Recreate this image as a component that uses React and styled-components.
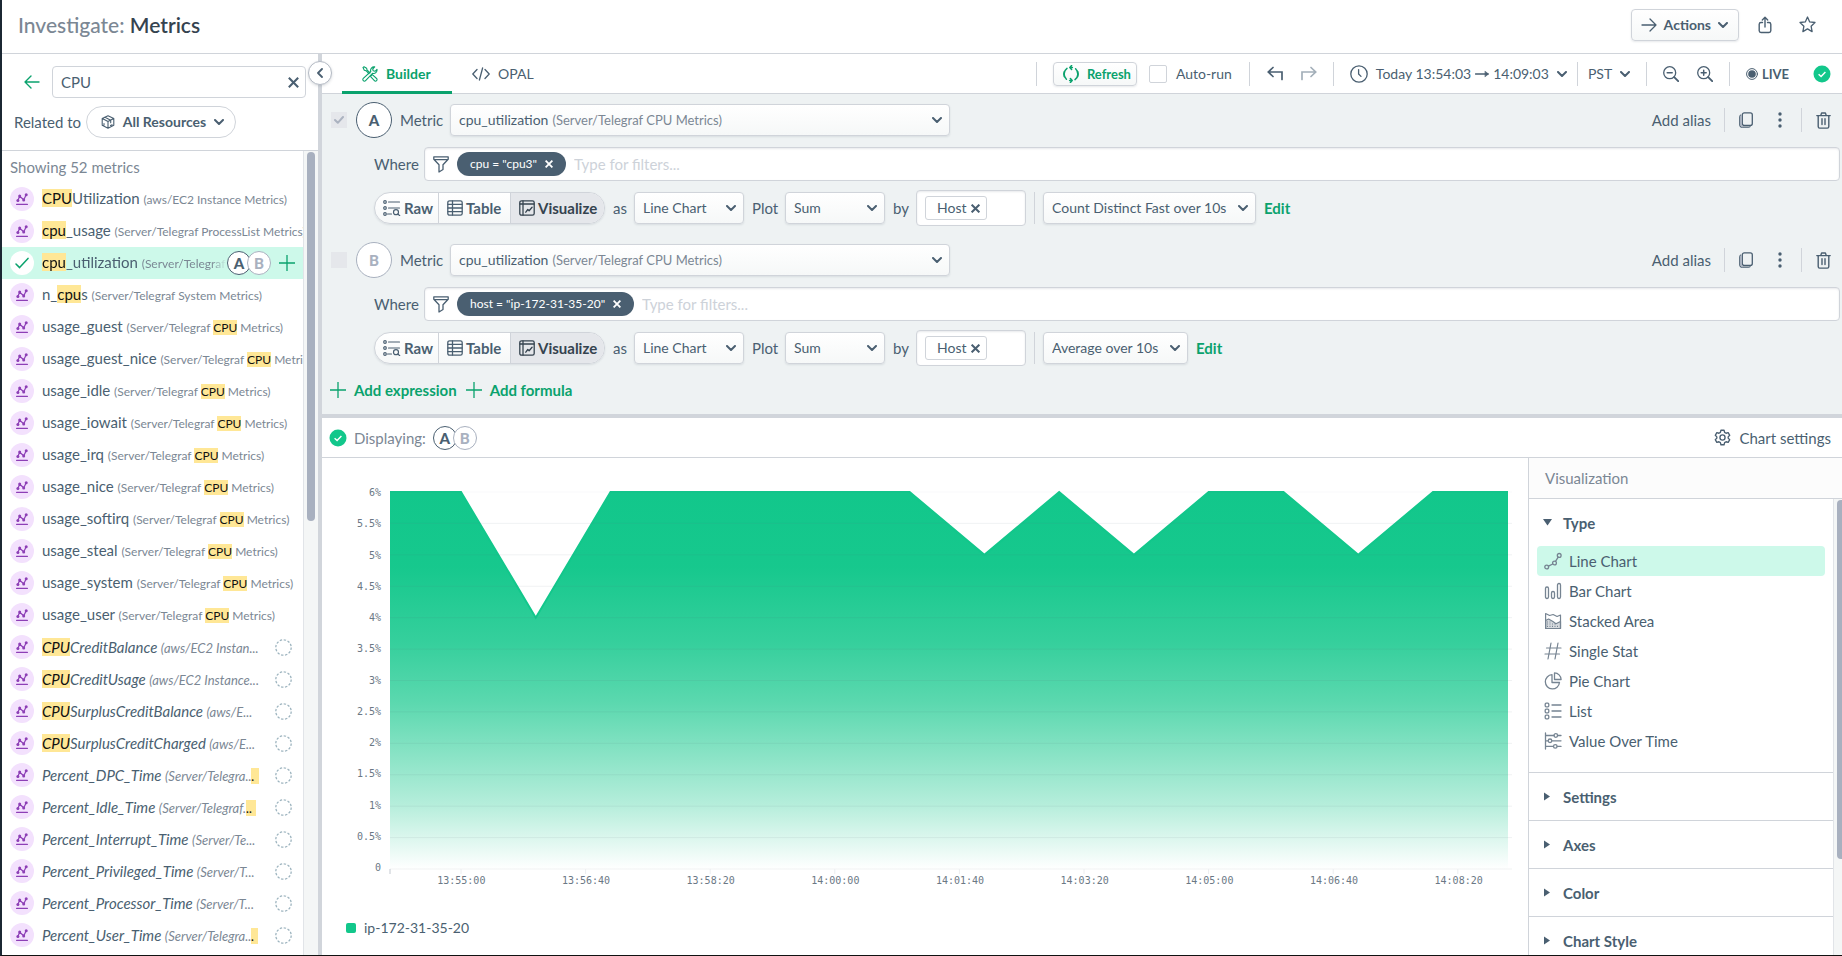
import React from "react";
import styled, { createGlobalStyle, css } from "styled-components";

const c = {
  text: "#4a5f71",
  dark: "#35434f",
  muted: "#7b8794",
  faint: "#a9b1bf",
  line: "#d0d4da",
  green: "#0aa26d",
  bright: "#12c78b",
  mint: "#cdf9ea",
  panel: "#eef2f3",
};

const GlobalStyle = createGlobalStyle`
  *, *::before, *::after { box-sizing: border-box; }
  body { margin: 0; background: #fff; }
  body, button, input, select {
    font-family: Lato, "Open Sans", sans-serif;
    font-size: 15px;
    line-height: 20px;
    color: ${c.text};
  }
  button { border: 0; background: none; padding: 0; cursor: pointer; }
  svg { display: block; flex: none; }
  ul { list-style: none; margin: 0; padding: 0; }
  h1, h2 { margin: 0; font-weight: 400; }
`;

/* ---------- icons ---------- */

const Svg = ({ w = 16, h, vb, sw = 1.3, children, ...rest }) => (
  <svg
    width={w}
    height={h || w}
    viewBox={vb || `0 0 ${w} ${h || w}`}
    fill="none"
    stroke="currentColor"
    strokeWidth={sw}
    strokeLinecap="round"
    strokeLinejoin="round"
    aria-hidden="true"
    {...rest}
  >
    {children}
  </svg>
);

const Chevron = () => (
  <Svg w={10} h={6} sw={2}>
    <path d="M1 1l4 4 4-4" />
  </Svg>
);
const Cross = ({ size = 8, sw = 1.8 }) => (
  <Svg w={size} vb="0 0 8 8" sw={sw} strokeLinecap="butt">
    <path d="M.6.6l6.8 6.8M7.4.6L.6 7.4" />
  </Svg>
);
const Plus = () => (
  <Svg strokeLinecap="butt">
    <path d="M8 0v16M0 8h16" />
  </Svg>
);
const MetricGlyph = () => (
  <Svg w={12} sw={1.2}>
    <path d="M.6 11.4h10.8M1.8 7.8l1.8-4.6 4.2 3.6 2.4-5" />
    <g fill="currentColor" stroke="none">
      <circle cx="1.9" cy="7.6" r="1.5" />
      <circle cx="3.7" cy="3" r="1.5" />
      <circle cx="7.7" cy="6.9" r="1.5" />
      <circle cx="10.2" cy="1.8" r="1.5" />
    </g>
  </Svg>
);
const CheckThin = () => (
  <Svg w={14} h={12} sw={1.5}>
    <path d="M1 7l3.6 3.6L13 1.4" />
  </Svg>
);
const BackArrow = () => (
  <Svg w={16} h={14} sw={1.4}>
    <path d="M15 7H1M7 1L1 7l6 6" />
  </Svg>
);
const Cube = () => (
  <Svg w={14} sw={1.1}>
    <path d="M7 .7l5.8 2.8v6.8L7 13.3l-5.8-3V3.500zM1.400 3.600L7 6.600l5.600-3M7 6.600v6.500M4 2.200l5.700 3v2.600M9.500 10.500l1.600-.8M3 8.500v1.400" />
  </Svg>
);
const Tools = () => (
  <Svg sw={1.1}>
    <path d="M1 1.600L2 .7l2.600 1.500.4 1.600 3 3M1 1.600l1.300 2.600 1.700.5 2.900 3M9.300 9.600l1-1 4.300 3.900a1.500 1.500 0 010 2.200 1.500 1.500 0 01-2.200 0L8.600 10.600z" />
    <path d="M12.700.9a3.500 3.500 0 00-3.900 4.600L1.300 12.400a1.600 1.600 0 000 2.300 1.600 1.600 0 002.300 0l6.900-7.400a3.500 3.500 0 004.500-4l-2 2-1.800-.5-.5-1.800z" />
  </Svg>
);
const Code = () => (
  <Svg w={18} h={14} sw={1.3}>
    <path d="M5 2.500L.8 7 5 11.500M13 2.500L17.200 7 13 11.500M10.600 1L7.400 13" />
  </Svg>
);
const Refresh = () => (
  <Svg w={18} sw={1.5}>
    <path d="M5 3.400a7 7 0 00-.6 10.800M13 14.600a7 7 0 00.6-10.800" />
    <path d="M10.400 2.500H7.900M9.600.6L7.800 2.500l1.800 2M7.600 15.500h2.500M8.400 13.500l1.800 2-1.800 1.900" />
    <path d="M2.300 6.500a7 7 0 000 5M15.700 11.500a7 7 0 000-5" />
  </Svg>
);
const Undo = ({ flip }) => (
  <Svg sw={1.7} strokeLinejoin="miter" transform={flip ? "scale(-1 1)" : undefined}>
    <path d="M15 13.500V6H1.300M6 1.500L1.300 6 6 10.500" />
  </Svg>
);
const Clock = () => (
  <Svg w={18}>
    <circle cx="9" cy="9" r="8.200" />
    <path d="M8.600 4.600V9l2.400 2.400" />
  </Svg>
);
const Arrow = () => (
  <Svg w={14} h={10} sw={1.4}>
    <path d="M.5 5h12.600" />
    <path d="M10.200 2.300L13.500 5l-3.300 2.700z" fill="currentColor" strokeWidth=".5" />
  </Svg>
);
const ActionArrow = () => (
  <Svg w={16} h={14} sw={1.3}>
    <path d="M1 7h14M9 1l6 6-6 6" />
  </Svg>
);
const Zoom = ({ plus }) => (
  <Svg>
    <circle cx="6.700" cy="6.700" r="6" />
    <path d="M11.200 11.200l4 4" strokeWidth="1.900" />
    <path d={plus ? "M4.200 6.700h5M6.700 4.200v5" : "M4.200 6.700h5"} strokeWidth="1.500" />
  </Svg>
);
const Live = () => (
  <Svg w={12} sw={1}>
    <circle cx="6" cy="6" r="5.400" />
    <circle cx="6" cy="6" r="3.800" fill="currentColor" stroke="none" />
  </Svg>
);
const CheckDisc = () => (
  <svg width="18" height="18" viewBox="0 0 18 18" aria-hidden="true">
    <circle cx="9" cy="9" r="8.500" fill={c.bright} />
    <path d="M5.600 9.200l2.500 2.400 4.300-4.600" fill="none" stroke="#fff" strokeWidth="1.400" />
  </svg>
);
const Share = () => (
  <Svg w={14} h={18} sw={1.4}>
    <path d="M4.500 6.500H3A1.800 1.800 0 001.200 8.200v6.600A1.800 1.800 0 003 16.500h8a1.800 1.800 0 001.800-1.700V8.200A1.800 1.800 0 0011 6.500H9.500M7 11V1.500M4.300 4L7 1.300 9.700 4" />
  </Svg>
);
const Star = () => (
  <Svg sw={1.3} w={17}>
    <path d="M8.500 1l2.200 4.900 5.300.6-3.900 3.700 1 5.400-4.600-2.700-4.600 2.700 1-5.400L1 6.500l5.300-.6z" />
  </Svg>
);
const Copy = () => (
  <Svg w={14} h={16} sw={1.3}>
    <rect x="3.300" y=".8" width="10" height="12.600" rx="2" />
    <path d="M1.600 3.200c-.6.5-.8 1-.8 2v7.600a2.400 2.400 0 002.400 2.400h6.200c.8 0 1.300-.2 1.700-.6" />
    <path d="M2 4v9.500c.3.600.8 1 1.600 1" stroke={c.faint} strokeWidth="1.600" />
  </Svg>
);
const Dots = () => (
  <svg width="4" height="16" viewBox="0 0 4 16" fill="currentColor" aria-hidden="true">
    <circle cx="2" cy="2" r="1.700" />
    <circle cx="2" cy="8" r="1.700" />
    <circle cx="2" cy="14" r="1.700" />
  </svg>
);
const Trash = () => (
  <Svg w={15} h={17} sw={1.4}>
    <path d="M.8 3.600h13.400M2.200 3.800v10.700c0 1 .5 1.600 1.500 1.600h7.600c1 0 1.500-.6 1.500-1.600V3.800M4.800 3.400l.8-2.400h3.800l.8 2.400M6 6.800v5.800M9 6.800v5.800" />
  </Svg>
);
const Funnel = () => (
  <Svg w={16} h={17} sw={1.3}>
    <path d="M.8.900h14.400v2.300L10 8.800v4.700l-4 2.500V8.800L.8 3.200zM1 3.600h14" />
  </Svg>
);
const RawIcon = () => (
  <Svg w={18} h={16} sw={1.2}>
    <circle cx="2" cy="2" r="1.300" />
    <circle cx="2" cy="8" r="1.300" />
    <circle cx="2" cy="14" r="1.300" />
    <path d="M5.500 2h11M5.500 8h11M4.500 14h4" />
    <circle cx="13" cy="12.200" r="2.500" />
    <path d="M14.900 14l1.800 1.700" />
  </Svg>
);
const TableIcon = () => (
  <Svg sw={1.3}>
    <rect x=".8" y=".8" width="14.400" height="14.400" rx="1.800" />
    <path d="M5.500 1v14M1 4.400h14M1 8h14M1 11.600h14" />
  </Svg>
);
const VisIcon = () => (
  <Svg sw={1.3}>
    <rect x=".8" y=".8" width="14.400" height="14.400" rx="1.800" />
    <path d="M4 1v14M1 4h14M6.800 12.200l2-2.700 1.300 1.200 3-3.400" />
  </Svg>
);
const Gear = () => (
  <Svg w={17} vb="0 0 24 24" sw={1.900}>
    <path d="M9.800 1.800h4.400l.8 3 2 1.200 3-.9 2.200 3.800-2.200 2.200v1.800l2.200 2.200-2.200 3.800-3-.9-2 1.200-.8 3H9.800l-.8-3-2-1.200-3 .9-2.200-3.800L4 12.900v-1.800L1.800 8.900 4 5.100l3 .9 2-1.200z" />
    <circle cx="12" cy="12" r="3.600" />
  </Svg>
);
const typeIcons = {
  line: (
    <Svg w={18}>
      <circle cx="2.700" cy="15" r="1.900" />
      <circle cx="10.500" cy="11" r="1.900" />
      <circle cx="15.200" cy="3.400" r="1.900" />
      <path d="M4.500 14.200l4.200-2.200M11.500 9.300l2.700-4.200" />
    </Svg>
  ),
  bar: (
    <Svg w={18}>
      <rect x="1.500" y="5" width="3" height="11.500" rx="1.400" />
      <rect x="7.500" y="9.500" width="3" height="7" rx="1.400" />
      <rect x="13.500" y="1.500" width="3" height="15" rx="1.400" />
    </Svg>
  ),
  area: (
    <Svg w={18} sw={1.2}>
      <path d="M1.600 16.500v-15l4 2 3.500-1 4 2 3.400-1.500v13.500z" />
      <path d="M1.600 8.500l3-1.500 4.300 2.500 3 2.300 4.600-2.300v7H1.600z" fill="currentColor" fillOpacity=".3" />
      <path d="M3 10h4M3 12h10M3 14.400h12" strokeDasharray="1 1.500" strokeLinecap="butt" />
    </Svg>
  ),
  stat: (
    <Svg w={18} sw={1.2}>
      <path d="M2.500 6h14.500M1 12h14.500M7 1L4 17M14 1l-3 16" />
    </Svg>
  ),
  pie: (
    <Svg w={18}>
      <path d="M8 2.700a7.100 7.100 0 107.500 7.800H8z" />
      <path d="M10.500.9v6.600h6.600A6.800 6.800 0 0010.500.9z" />
    </Svg>
  ),
  list: (
    <Svg w={18}>
      <rect x="1.200" y="1.200" width="3.600" height="3.600" rx="1" />
      <rect x="1.200" y="7.200" width="3.600" height="3.600" rx="1" />
      <rect x="1.200" y="13.200" width="3.600" height="3.600" rx="1" />
      <path d="M8 3h9M8 9h9M8 15h9" />
    </Svg>
  ),
  value: (
    <Svg w={18}>
      <path d="M1.500 1v16M1.500 3.500h8.500M13.500 3.500H17M1.500 8.800H4M8.200 8.800H17M1.500 14.400h7.700M13.200 14.400H17" />
      <circle cx="11.800" cy="3.500" r="1.800" />
      <circle cx="6" cy="8.800" r="1.800" />
      <circle cx="11.300" cy="14.400" r="1.800" />
    </Svg>
  ),
};

/* ---------- page frame ---------- */

const Page = styled.div`
  display: flex;
  flex-direction: column;
  height: 100vh;
  border-left: 2px solid #1b2733;
  border-bottom: 1px solid #111;
  overflow: hidden;
`;
const Header = styled.header`
  display: flex;
  align-items: center;
  gap: 10px;
  height: 54px;
  flex: none;
  padding: 0 19px 4px 16px;
  border-bottom: 1px solid ${c.line};
`;
const Title = styled.h1`
  flex: 1;
  font-size: 21px;
  line-height: 28px;
  font-weight: 500;
  color: ${c.muted};
  strong { color: ${c.dark}; font-weight: 600; }
`;
const raised = css`
  border: 1px solid ${c.line};
  border-radius: 4px;
  background: linear-gradient(#fff, #f6f8f8);
  box-shadow: 0 1px 2px rgba(60, 75, 90, 0.12);
`;
const ActionsButton = styled.button`
  ${raised}
  display: flex;
  align-items: center;
  gap: 7px;
  height: 32px;
  padding: 0 10px 0 9px;
  font-size: 14px;
  font-weight: 700;
`;
const IconButton = styled.button`
  display: grid;
  place-items: center;
  width: ${(p) => p.$size || 16}px;
  height: ${(p) => p.$size || 16}px;
  color: ${(p) => p.$color || c.text};
`;
const Body = styled.div`
  display: flex;
  flex: 1;
  min-height: 0;
`;

/* ---------- metric browser ---------- */

const Sidebar = styled.aside`
  display: flex;
  flex-direction: column;
  width: 316px;
  flex: none;
`;
const SideHead = styled.div`
  display: flex;
  flex-direction: column;
  gap: 8px;
  padding: 12px;
  border-bottom: 1px solid ${c.line};
`;
const SearchRow = styled.div`
  display: flex;
  align-items: center;
  gap: 12px;
  padding-left: 10px;
`;
const SearchBox = styled.div`
  display: flex;
  align-items: center;
  flex: 1;
  height: 32px;
  padding: 0 6px 0 8px;
  border: 1px solid ${c.line};
  border-radius: 4px;
  input { flex: 1; min-width: 0; border: 0; outline: 0; padding: 0; background: none; }
`;
const RelatedRow = styled.div`
  display: flex;
  align-items: center;
  gap: 8px;
  white-space: nowrap;
`;
const Pill = styled.button`
  display: flex;
  align-items: center;
  justify-content: space-between;
  width: 150px;
  height: 32px;
  padding: 0 11px 0 14px;
  border: 1px solid ${c.line};
  border-radius: 16px;
  font-size: 14px;
  font-weight: 700;
`;
const ListArea = styled.div`
  display: flex;
  flex: 1;
  min-height: 0;
`;
const ListPane = styled.div`
  flex: 1;
  min-width: 0;
  overflow: hidden;
`;
const Count = styled.div`
  height: 32px;
  padding: 6px 8px;
  color: ${c.muted};
`;
const Track = styled.div`
  width: ${(p) => p.$width}px;
  flex: none;
  padding: 1px 0 0 3px;
  overflow: hidden;
  border-left: 1px solid #e1e4e8;
  background: #f4f6f6;
`;
const Thumb = styled.div`
  width: 8px;
  height: ${(p) => p.$share}%;
  border-radius: 4px;
  background: #a8b0bf;
`;
const Source = styled.span`
  font-size: 13px;
  color: ${c.muted};
`;
const Item = styled.li`
  display: flex;
  align-items: center;
  gap: 8px;
  height: 32px;
  padding-left: 8px;
  background: ${(p) => (p.$on ? c.mint : "transparent")};
  font-style: ${(p) => (p.$inactive ? "italic" : "normal")};
  ${Source} { font-size: ${(p) => (p.$inactive ? 13 : 12)}px; }
`;
const Disc = styled.span`
  display: grid;
  place-items: center;
  width: 24px;
  height: 24px;
  flex: none;
  border-radius: 50%;
  background: ${(p) => (p.$on ? "#fff" : "#f3e1fd")};
  color: ${(p) => (p.$on ? c.green : "#8d3fb6")};
`;
const ItemName = styled.button`
  flex: 1;
  min-width: 0;
  overflow: hidden;
  text-align: left;
  white-space: nowrap;
  font-style: inherit;
  ${(p) =>
    p.$fade && css`mask-image: linear-gradient(to left, transparent, #000 16px);`}
`;
const Mark = styled.mark`
  background: #ffe796;
  color: #111;
`;
const TailMark = styled(Mark)`
  padding-right: 4px;
`;
const DashRing = styled.span`
  display: grid;
  place-items: center;
  width: 40px;
  margin-left: -8px;
  color: #9db4bf;
`;
const RowTools = styled.span`
  display: flex;
  align-items: center;
  gap: 8px;
  padding-right: 8px;
  margin-left: -8px;
`;
const BadgePair = styled.span`
  display: flex;
  & > :last-child { margin-left: -4px; }
`;
const Badge = styled.span`
  display: grid;
  place-items: center;
  width: ${(p) => p.$size || 24}px;
  height: ${(p) => p.$size || 24}px;
  flex: none;
  border: 1px solid ${(p) => (p.$dim ? c.faint : c.text)};
  border-radius: 50%;
  background: #fff;
  color: ${(p) => (p.$dim ? c.faint : c.text)};
  font-style: normal;
  font-weight: 900;
`;

const Divider = styled.div`
  position: relative;
  width: 4px;
  flex: none;
  background: #d1d5db;
`;
const Collapse = styled.button`
  position: absolute;
  top: 7px;
  left: -10px;
  z-index: 1;
  display: grid;
  place-items: center;
  width: 24px;
  height: 24px;
  border: 1px solid #b4bac4;
  border-radius: 50%;
  background: #fff;
  box-shadow: 0 1px 3px rgba(60, 75, 90, 0.2);
`;

/* ---------- main column ---------- */

const Main = styled.main`
  display: flex;
  flex-direction: column;
  flex: 1;
  min-width: 0;
`;
const Toolbar = styled.div`
  display: flex;
  align-items: center;
  height: 40px;
  flex: none;
  padding: 0 11px 0 20px;
  border-bottom: 1px solid ${c.line};
  background: #fff;
  white-space: nowrap;
`;
const Tab = styled.button`
  display: flex;
  align-items: center;
  align-self: stretch;
  gap: 8px;
  width: 110px;
  padding: 3px 20px 0;
  margin-bottom: -1px;
  border-bottom: 3px solid ${(p) => (p.$on ? c.green : "transparent")};
  border-radius: 2px 2px 0 0;
  color: ${(p) => (p.$on ? c.green : c.text)};
  font-size: 14px;
  font-weight: ${(p) => (p.$on ? 700 : 400)};
`;
const Spring = styled.span`
  flex: 1;
`;
const Rule = styled.span`
  width: 1px;
  height: ${(p) => p.$height || 24}px;
  margin: 0 ${(p) => p.$space}px;
  flex: none;
  background: ${c.line};
`;
const RefreshButton = styled.button`
  ${raised}
  display: flex;
  align-items: center;
  gap: 7px;
  width: 84px;
  height: 24px;
  padding: 0 8px;
  margin-right: 12px;
  color: ${c.green};
  font-size: 13px;
  font-weight: 700;
`;
const TickLabel = styled.label`
  display: flex;
  align-items: center;
  gap: 9px;
  font-size: 14px;
`;
const Tick = styled.input`
  appearance: none;
  width: 18px;
  height: 18px;
  margin: 0;
  border: 1px solid ${c.line};
  border-radius: 2px;
`;
const Group = styled.span`
  display: flex;
  align-items: center;
  gap: ${(p) => p.$gap}px;
`;
const TextButton = styled.button`
  display: flex;
  align-items: center;
  gap: ${(p) => p.$gap || 8}px;
  white-space: nowrap;
  color: ${(p) => p.$color || c.text};
  font-weight: ${(p) => (p.$bold ? 700 : 400)};
  font-size: ${(p) => p.$font || 15}px;
`;

const SelectBox = styled.span`
  ${(p) => !p.$bare && raised}
  display: grid;
  align-items: center;
  width: ${(p) => p.$width}px;
  height: 32px;
  flex: none;
  & > * { grid-area: 1 / 1; }
  svg { justify-self: end; margin-right: ${(p) => (p.$bare ? 0 : 7)}px; pointer-events: none; }
`;
const Select = styled.select`
  appearance: none;
  width: 100%;
  height: 100%;
  padding: 0 16px 0 ${(p) => (p.$bare ? 0 : 8)}px;
  border: 0;
  background: none;
  outline: 0;
  font-size: 14px;
`;
const Dropdown = ({ label, value, width, bare }) => (
  <SelectBox $width={width} $bare={bare}>
    <Select aria-label={label} $bare={bare} defaultValue={value}>
      <option>{value}</option>
    </Select>
    <Chevron />
  </SelectBox>
);

const Builder = styled.section`
  padding: 8px 2px 16px 8px;
  background: ${c.panel};
  border-bottom: 4px solid #d1d5db;
`;
const Expression = styled.div`
  padding-bottom: 16px;
`;
const MetricRow = styled.div`
  display: flex;
  align-items: center;
  gap: 8px;
  height: 36px;
  padding-right: 9px;
`;
const RowTick = styled.span`
  display: grid;
  place-items: center;
  width: 16px;
  height: 16px;
  margin: 0 1px;
  background: #e5e7eb;
  color: #abb3c0;
  & > * { grid-area: 1 / 1; }
  input { appearance: none; width: 16px; height: 16px; margin: 0; }
  svg { pointer-events: none; }
`;
const Word = styled.span`
  width: ${(p) => p.$width}px;
  flex: none;
`;
const MetricButton = styled.button`
  ${raised}
  display: flex;
  align-items: center;
  gap: 4px;
  width: 500px;
  height: 32px;
  padding: 0 7px 0 8px;
  font-size: 14px;
  ${Source} { flex: 1; text-align: left; }
`;
const WhereRow = styled.div`
  display: flex;
  align-items: center;
  gap: 8px;
  margin-top: 9px;
  padding-left: 44px;
`;
const FilterBox = styled.div`
  display: flex;
  align-items: center;
  gap: 8px;
  flex: 1;
  height: 34px;
  padding: 0 8px;
  border: 1px solid ${c.line};
  border-radius: 4px;
  background: #fff;
  box-shadow: inset 0 1px 2px rgba(60, 75, 90, 0.12);
  input { flex: 1; border: 0; outline: 0; padding: 0; background: none; }
  input::placeholder { color: #cdd2d9; opacity: 1; }
`;
const FilterChip = styled.span`
  display: flex;
  align-items: center;
  gap: 8px;
  height: 24px;
  padding: 0 13px;
  border-radius: 12px;
  background: ${c.text};
  color: #fff;
  font-size: 12px;
  white-space: nowrap;
`;
const PlotRow = styled.div`
  display: flex;
  align-items: center;
  gap: 8px;
  height: 36px;
  margin-top: 9px;
  padding-left: 44px;
  white-space: nowrap;
`;
const Segments = styled.div`
  ${raised}
  display: flex;
  height: 32px;
  border-radius: 16px;
  overflow: hidden;
`;
const Segment = styled.button`
  display: flex;
  align-items: center;
  gap: 3px;
  width: ${(p) => p.$width}px;
  padding-left: 8px;
  border-left: ${(p) => (p.$first ? 0 : 1)}px solid ${c.line};
  background: ${(p) => (p.$on ? "#e5e7eb" : "none")};
  color: ${(p) => (p.$on ? c.dark : c.text)};
  font-weight: 700;
`;
const GroupBox = styled.div`
  display: flex;
  align-items: center;
  width: 110px;
  height: 36px;
  padding: 0 8px;
  border: 1px solid ${c.line};
  border-radius: 4px;
  background: #fff;
  box-shadow: inset 0 1px 2px rgba(60, 75, 90, 0.12);
`;
const GroupChip = styled.span`
  display: flex;
  align-items: center;
  justify-content: space-between;
  width: 62px;
  height: 24px;
  padding: 0 6px 0 11px;
  border: 1px solid ${c.line};
  border-radius: 3px;
  font-size: 14px;
`;
const AddRow = styled.div`
  display: flex;
  align-items: center;
  gap: 9px;
  height: 16px;
`;

const StatusBar = styled.div`
  display: flex;
  align-items: center;
  gap: 7px;
  height: 40px;
  flex: none;
  padding: 0 11px 0 7px;
  border-bottom: 1px solid ${c.line};
`;
const Muted = styled.span`
  color: ${c.muted};
`;
const Lower = styled.div`
  display: flex;
  flex: 1;
  min-height: 0;
`;

/* ---------- chart ---------- */

const ChartPane = styled.section`
  display: flex;
  flex-direction: column;
  flex: 1;
  min-width: 0;
  padding: 34px 16px 17px 24px;
`;
const mono = css`
  font-family: "DejaVu Sans Mono", "Liberation Mono", monospace;
  font-size: 10px;
  line-height: 12px;
  color: #6b7885;
`;
const PlotGrid = styled.div`
  display: grid;
  grid-template-columns: 35px 1fr;
  grid-template-rows: 1fr auto;
  column-gap: 9px;
  flex: 1;
  min-height: 0;
`;
const YAxis = styled.div`
  ${mono}
  display: flex;
  flex-direction: column;
  justify-content: space-between;
  align-items: flex-end;
  margin: -5px 0;
`;
const Plot = styled.svg`
  width: 100%;
  height: 100%;
  min-height: 0;
  overflow: visible;
`;
const XAxis = styled.div`
  ${mono}
  grid-column: 2;
  display: grid;
  grid-template-columns: repeat(9, 1fr);
  margin: 6px -9px 0 9px;
  text-align: center;
`;
const Legend = styled.div`
  display: flex;
  align-items: center;
  gap: 8px;
  margin-top: 31px;
  font-size: 14px;
  &::before {
    content: "";
    width: 10px;
    height: 10px;
    border-radius: 2px;
    background: ${c.bright};
  }
`;

const yTicks = ["6%", "5.5%", "5%", "4.5%", "4%", "3.5%", "3%", "2.5%", "2%", "1.5%", "1%", "0.5%", "0"];
const xTicks = ["13:55:00", "13:56:40", "13:58:20", "14:00:00", "14:01:40", "14:03:20", "14:05:00", "14:06:40", "14:08:20"];
const series = [6, 6, 4, 6, 6, 6, 6, 6, 5, 6, 5, 6, 6, 5, 6, 6];

const PLOT_W = 1122;
const PLOT_H = 378;
const pointX = (i) => (i === 0 ? 0 : i === series.length - 1 ? 1118 : 71 + (i - 1) * 74.77);
const pointY = (v) => PLOT_H - (v / 6) * PLOT_H;

function AreaChart() {
  const pts = series.map((v, i) => `${pointX(i)},${pointY(v)}`).join(" ");
  return (
    <ChartPane aria-label="CPU utilization chart">
      <PlotGrid>
        <YAxis>
          {yTicks.map((t) => (
            <span key={t}>{t}</span>
          ))}
        </YAxis>
        <Plot viewBox={`0 0 ${PLOT_W} ${PLOT_H}`} preserveAspectRatio="none" role="img" aria-label="Area chart">
          <defs>
            <linearGradient id="fade" x1="0" y1="0" x2="0" y2="1">
              <stop offset="0" stopColor={c.bright} />
              <stop offset="0.2" stopColor={c.bright} stopOpacity="0.98" />
              <stop offset="0.4" stopColor={c.bright} stopOpacity="0.85" />
              <stop offset="0.56" stopColor={c.bright} stopOpacity="0.69" />
              <stop offset="0.83" stopColor={c.bright} stopOpacity="0.31" />
              <stop offset="1" stopColor={c.bright} stopOpacity="0" />
            </linearGradient>
          </defs>
          <polygon points={`0,${PLOT_H} ${pts} 1118,${PLOT_H}`} fill="url(#fade)" />
          <polyline points={pts} fill="none" stroke={c.bright} strokeWidth="2" vectorEffect="non-scaling-stroke" />
          {yTicks.map((t, i) => (
            <line
              key={t}
              x1="0"
              x2={PLOT_W}
              y1={(i * PLOT_H) / 12}
              y2={(i * PLOT_H) / 12}
              stroke="#5a6b7a"
              strokeOpacity={i === 0 ? 0.03 : 0.09}
              vectorEffect="non-scaling-stroke"
            />
          ))}
          <path d={`M0 ${PLOT_H}v5`} stroke="#c3c9d0" vectorEffect="non-scaling-stroke" />
          {xTicks.map((t, i) => (
            <path key={t} d={`M${71 + i * 124.6} ${PLOT_H}v5`} stroke="#eceef0" vectorEffect="non-scaling-stroke" />
          ))}
        </Plot>
        <XAxis>
          {xTicks.map((t) => (
            <span key={t}>{t}</span>
          ))}
        </XAxis>
      </PlotGrid>
      <Legend>ip-172-31-35-20</Legend>
    </ChartPane>
  );
}

/* ---------- visualization settings ---------- */

const Settings = styled.aside`
  display: flex;
  flex-direction: column;
  width: 314px;
  flex: none;
  border-left: 1px solid ${c.line};
`;
const SettingsTitle = styled.h2`
  height: 41px;
  flex: none;
  padding: 10px 16px;
  border-bottom: 1px solid ${c.line};
  background: #fcfcfc;
  color: ${c.muted};
  font-size: 15px;
  line-height: 20px;
`;
const SettingsBody = styled.div`
  display: flex;
  flex: 1;
  min-height: 0;
`;
const Sections = styled.div`
  flex: 1;
  overflow: hidden;
`;
const Section = styled.div`
  border-bottom: 1px solid ${c.line};
  padding-bottom: ${(p) => (p.$open ? 16 : 0)}px;
`;
const SectionHead = styled.button`
  display: flex;
  align-items: center;
  gap: 11px;
  width: 100%;
  height: 47px;
  padding-left: 14px;
  font-weight: 700;
`;
const TypeOption = styled.button`
  display: flex;
  align-items: center;
  gap: 7px;
  width: calc(100% - 16px);
  height: 30px;
  margin: 0 8px;
  padding-left: 7px;
  border-radius: 4px;
  background: ${(p) => (p.$on ? c.mint : "none")};
  svg { color: #768492; }
`;

const Triangle = ({ open }) => (
  <svg width="9" height="9" viewBox="0 0 9 9" fill="currentColor" aria-hidden="true">
    <path d={open ? "M0 1h9L4.500 7.500z" : "M1 0.500l6 4-6 4z"} />
  </svg>
);

const types = [
  ["line", "Line Chart"],
  ["bar", "Bar Chart"],
  ["area", "Stacked Area"],
  ["stat", "Single Stat"],
  ["pie", "Pie Chart"],
  ["list", "List"],
  ["value", "Value Over Time"],
];

/* ---------- data ---------- */

const tel = (s) => <>(Server/Telegraf {s})</>;
const cpuSource = tel(
  <>
    <Mark>CPU</Mark> Metrics
  </>
);
const CPU = <Mark>CPU</Mark>;
const cpu = <Mark>cpu</Mark>;

const metrics = [
  { name: <>{CPU}Utilization</>, source: "(aws/EC2 Instance Metrics)" },
  { name: <>{cpu}_usage</>, source: tel("ProcessList Metrics") },
  { name: <>{cpu}_utilization</>, source: "(Server/Telegraf", on: true },
  { name: <>n_{cpu}s</>, source: tel("System Metrics") },
  ...["guest", "guest_nice", "idle", "iowait", "irq", "nice", "softirq", "steal", "system", "user"].map((n) => ({
    name: `usage_${n}`,
    source: cpuSource,
  })),
  { name: <>{CPU}CreditBalance</>, source: "(aws/EC2 Instan...", inactive: true },
  { name: <>{CPU}CreditUsage</>, source: "(aws/EC2 Instance...", inactive: true },
  { name: <>{CPU}SurplusCreditBalance</>, source: "(aws/E...", inactive: true },
  { name: <>{CPU}SurplusCreditCharged</>, source: "(aws/E...", inactive: true },
  { name: "Percent_DPC_Time", source: <>(Server/Telegra..<TailMark>.</TailMark></>, inactive: true },
  { name: "Percent_Idle_Time", source: <>(Server/Telegraf.<TailMark>..</TailMark></>, inactive: true },
  { name: "Percent_Interrupt_Time", source: "(Server/Te...", inactive: true },
  { name: "Percent_Privileged_Time", source: "(Server/T...", inactive: true },
  { name: "Percent_Processor_Time", source: "(Server/T...", inactive: true },
  { name: "Percent_User_Time", source: <>(Server/Telegra..<TailMark>.</TailMark></>, inactive: true },
];

function MetricItem({ name, source, on, inactive }) {
  return (
    <Item $on={on} $inactive={inactive}>
      <Disc $on={on}>{on ? <CheckThin /> : <MetricGlyph />}</Disc>
      <ItemName $fade={on}>
        {name} <Source>{source}</Source>
      </ItemName>
      {on && (
        <RowTools>
          <BadgePair>
            <Badge>A</Badge>
            <Badge $dim>B</Badge>
          </BadgePair>
          <IconButton aria-label="Add metric" $color={c.green}>
            <Plus />
          </IconButton>
        </RowTools>
      )}
      {inactive && (
        <DashRing>
          <Svg sw={1.3} w={17} strokeLinecap="butt">
            <circle cx="8.500" cy="8.500" r="7.700" strokeDasharray="2.400 1.630" />
          </Svg>
        </DashRing>
      )}
    </Item>
  );
}

function ExpressionEditor({ id, active, filter, agg, aggWidth }) {
  return (
    <Expression>
      <MetricRow>
        <RowTick>
          <input type="checkbox" aria-label={`Show ${id}`} defaultChecked={active} disabled />
          {active && (
            <Svg w={10} h={8} sw={2}>
              <path d="M1 4l2.800 2.800L9 1" />
            </Svg>
          )}
        </RowTick>
        <Badge $size={36} $dim={!active}>
          {id}
        </Badge>
        <Word $width={42}>Metric</Word>
        <MetricButton aria-haspopup="listbox">
          cpu_utilization <Source>(Server/Telegraf CPU Metrics)</Source>
          <Chevron />
        </MetricButton>
        <Spring />
        <TextButton>Add alias</TextButton>
        <Rule $space={5} />
        <Group $gap={18}>
          <IconButton aria-label="Duplicate">
            <Copy />
          </IconButton>
          <IconButton aria-label="More">
            <Dots />
          </IconButton>
        </Group>
        <Rule $space={5} />
        <IconButton aria-label="Delete">
          <Trash />
        </IconButton>
      </MetricRow>
      <WhereRow>
        <Word $width={42}>Where</Word>
        <FilterBox>
          <Funnel />
          <FilterChip>
            {filter}
            <IconButton $size={8} $color="#fff" aria-label="Remove filter">
              <Cross />
            </IconButton>
          </FilterChip>
          <input aria-label="Filters" placeholder="Type for filters..." />
        </FilterBox>
      </WhereRow>
      <PlotRow>
        <Segments>
          <Segment $first $width={63}>
            <RawIcon /> Raw
          </Segment>
          <Segment $width={72}>
            <TableIcon /> Table
          </Segment>
          <Segment $on $width={94}>
            <VisIcon /> Visualize
          </Segment>
        </Segments>
        <Word $width={13}>as</Word>
        <Dropdown label="Chart type" value="Line Chart" width={110} />
        <Word $width={25}>Plot</Word>
        <Dropdown label="Aggregate" value="Sum" width={100} />
        <Word $width={15}>by</Word>
        <GroupBox>
          <GroupChip>
            Host
            <IconButton $size={10} aria-label="Remove Host">
              <Cross size={9} />
            </IconButton>
          </GroupChip>
        </GroupBox>
        <Rule $height={32} $space={0} />
        <Dropdown label="Alignment" value={agg} width={aggWidth} />
        <TextButton $bold $color={c.green}>
          Edit
        </TextButton>
      </PlotRow>
    </Expression>
  );
}

export default function App() {
  return (
    <Page>
      <GlobalStyle />
      <Header>
        <Title>
          Investigate: <strong>Metrics</strong>
        </Title>
        <ActionsButton>
          <ActionArrow /> Actions <Chevron />
        </ActionsButton>
        <IconButton $size={32} aria-label="Share">
          <Share />
        </IconButton>
        <IconButton $size={32} aria-label="Favorite">
          <Star />
        </IconButton>
      </Header>
      <Body>
        <Sidebar>
          <SideHead>
            <SearchRow>
              <IconButton aria-label="Back" $color={c.green}>
                <BackArrow />
              </IconButton>
              <SearchBox>
                <input aria-label="Search metrics" defaultValue="CPU" />
                <IconButton $size={12} aria-label="Clear">
                  <Cross size={11} sw={1.5} />
                </IconButton>
              </SearchBox>
            </SearchRow>
            <RelatedRow>
              <Word $width={64}>Related to</Word>
              <Pill>
                <Cube /> All Resources <Chevron />
              </Pill>
            </RelatedRow>
          </SideHead>
          <ListArea>
            <ListPane>
              <Count>Showing 52 metrics</Count>
              <ul>
                {metrics.map((m, i) => (
                  <MetricItem key={i} {...m} />
                ))}
              </ul>
            </ListPane>
            <Track $width={15}>
              <Thumb $share={46} />
            </Track>
          </ListArea>
        </Sidebar>
        <Divider>
          <Collapse aria-label="Collapse panel">
            <Svg w={6} h={10} sw={1.8}>
              <path d="M5 1L1 5l4 4" />
            </Svg>
          </Collapse>
        </Divider>
        <Main>
          <Toolbar>
            <Tab $on>
              <Tools /> Builder
            </Tab>
            <Tab>
              <Code /> OPAL
            </Tab>
            <Spring />
            <Rule $space={16} />
            <RefreshButton>
              <Refresh /> Refresh
            </RefreshButton>
            <TickLabel>
              <Tick type="checkbox" /> Auto-run
            </TickLabel>
            <Rule $space={17} />
            <Group $gap={18}>
              <IconButton aria-label="Undo">
                <Undo />
              </IconButton>
              <IconButton aria-label="Redo" $color="#a3afb9">
                <Undo flip />
              </IconButton>
            </Group>
            <Rule $space={16} />
            <TextButton $font={14}>
              <Clock />
              <Group $gap={4}>
                Today 13:54:03 <Arrow /> 14:09:03
              </Group>
              <Chevron />
            </TextButton>
            <Rule $space={10} $height={0} />
            <Dropdown label="Time zone" value="PST" width={42} bare />
            <Rule $space={16} />
            <Group $gap={18}>
              <IconButton aria-label="Zoom out">
                <Zoom />
              </IconButton>
              <IconButton aria-label="Zoom in">
                <Zoom plus />
              </IconButton>
            </Group>
            <Rule $space={16} />
            <Group $gap={24}>
              <TextButton $gap={4} $bold $font={13}>
                <Live /> LIVE
              </TextButton>
              <CheckDisc />
            </Group>
          </Toolbar>
          <Builder>
            <ExpressionEditor id="A" active filter={'cpu = "cpu3"'} agg="Count Distinct Fast over 10s" aggWidth={213} />
            <ExpressionEditor id="B" filter={'host = "ip-172-31-35-20"'} agg="Average over 10s" aggWidth={145} />
            <AddRow>
              <TextButton $bold $color={c.green}>
                <Plus /> Add expression
              </TextButton>
              <TextButton $bold $color={c.green}>
                <Plus /> Add formula
              </TextButton>
            </AddRow>
          </Builder>
          <StatusBar>
            <CheckDisc />
            <Muted>Displaying:</Muted>
            <BadgePair>
              <Badge>A</Badge>
              <Badge $dim>B</Badge>
            </BadgePair>
            <Spring />
            <TextButton>
              <Gear /> Chart settings
            </TextButton>
          </StatusBar>
          <Lower>
            <AreaChart />
            <Settings>
              <SettingsTitle>Visualization</SettingsTitle>
              <SettingsBody>
                <Sections>
                  <Section $open>
                    <SectionHead aria-expanded="true">
                      <Triangle open /> Type
                    </SectionHead>
                    {types.map(([k, label], i) => (
                      <TypeOption key={k} $on={i === 0} aria-pressed={i === 0}>
                        {typeIcons[k]} {label}
                      </TypeOption>
                    ))}
                  </Section>
                  {["Settings", "Axes", "Color", "Chart Style"].map((s) => (
                    <Section key={s}>
                      <SectionHead aria-expanded="false">
                        <Triangle /> {s}
                      </SectionHead>
                    </Section>
                  ))}
                </Sections>
                <Track $width={9}>
                  <Thumb $share={79} />
                </Track>
              </SettingsBody>
            </Settings>
          </Lower>
        </Main>
      </Body>
    </Page>
  );
}
